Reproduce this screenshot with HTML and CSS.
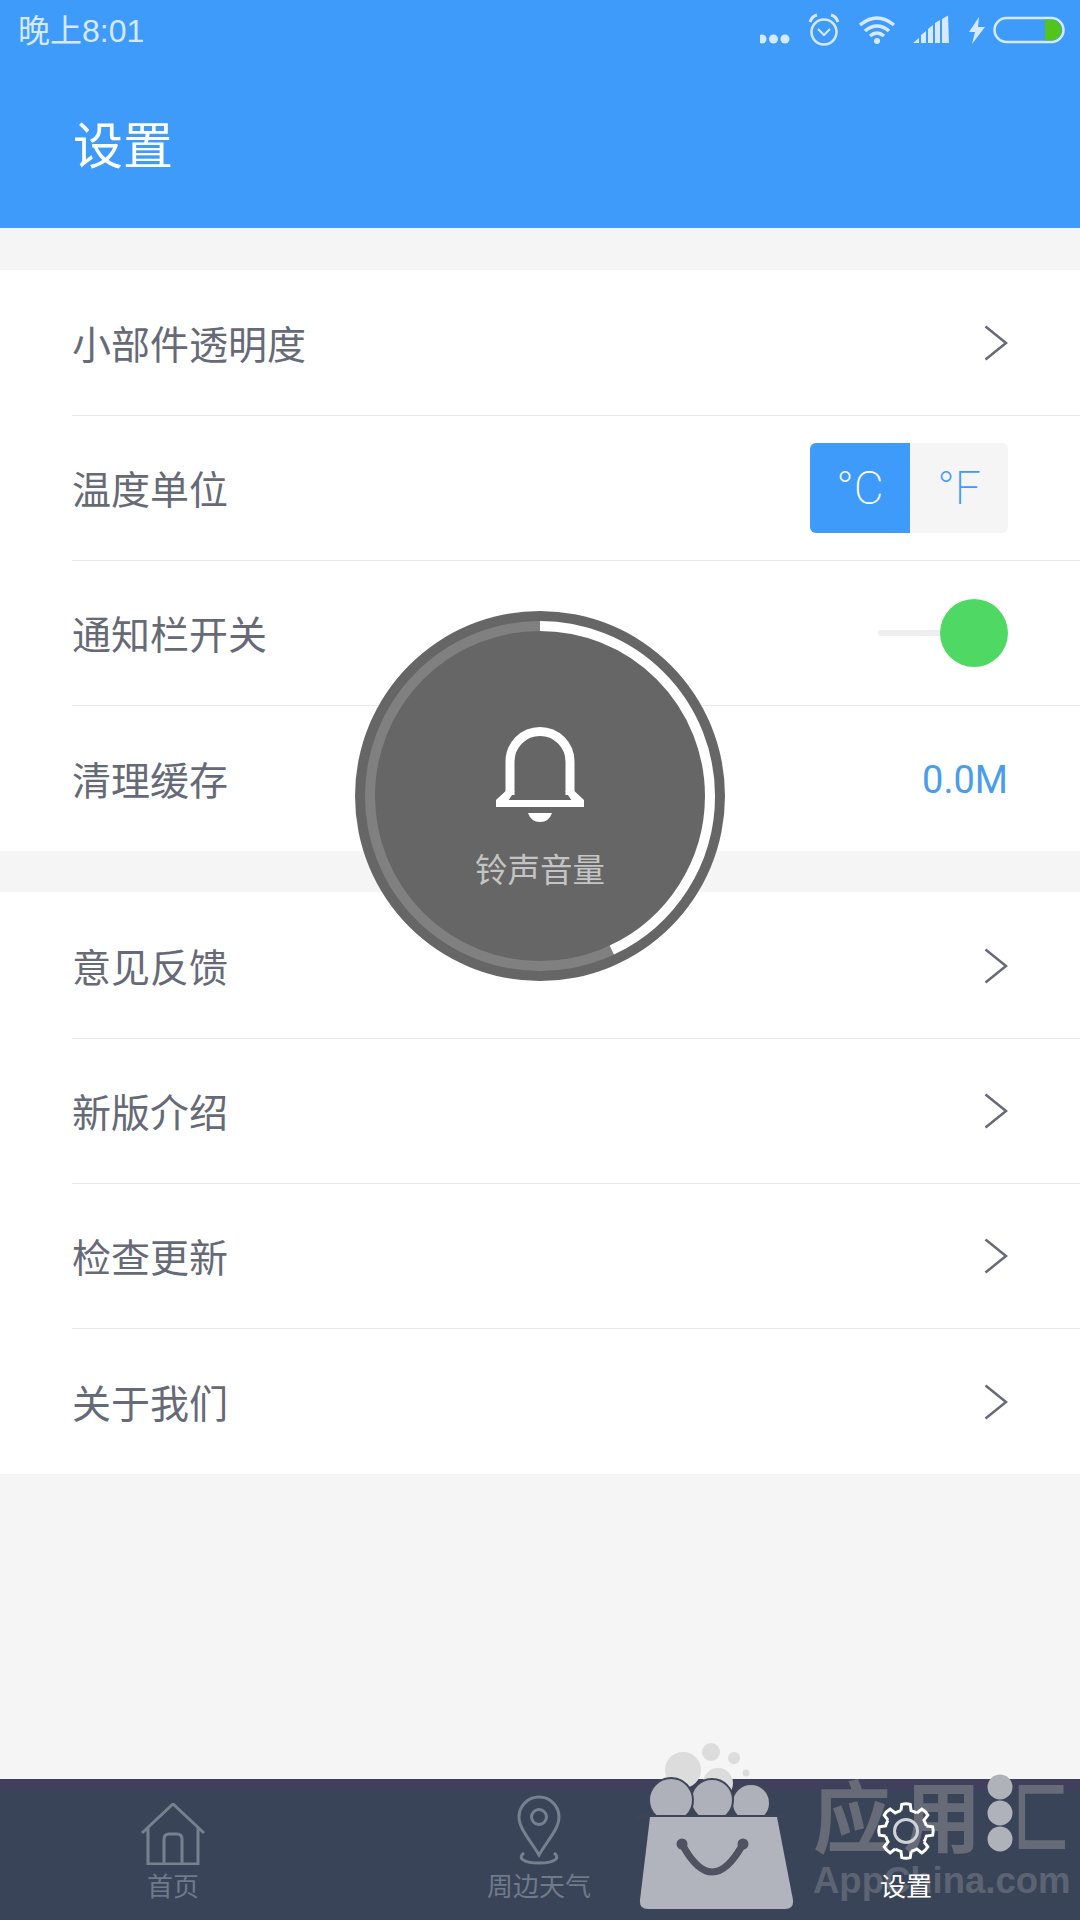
FILE: index.html
```html
<!DOCTYPE html>
<html lang="zh-CN">
<head>
<meta charset="utf-8">
<title>设置</title>
<link rel="stylesheet" href="styles.css">
</head>
<body>
<div class="app">
  <header class="header">
    <div class="status">
      <span class="time">晚上8:01</span>
      <svg class="status-icons" width="320" height="60" viewBox="760 0 320 60">
        <g fill="#d6e9fe">
          <circle cx="762" cy="39" r="4.500"/><circle cx="773.500" cy="39" r="4.500"/><circle cx="785" cy="39" r="4.500"/>
        </g>
        <g fill="none" stroke="#d6e9fe" stroke-width="2.500">
          <circle cx="824" cy="32" r="12.500"/>
          <path d="M818 29l6 6 6-6" stroke-width="2"/>
          <path d="M810 22q2-6 7-7M838 22q-2-6-7-7" stroke-width="3"/>
          <path d="M860 25q17-14 34 0M865 31q12-10 24 0M870 36q7-6 14 0" stroke-width="3.500"/>
          <rect x="994.500" y="18" width="69" height="24" rx="12" stroke-width="2.500"/>
        </g>
        <circle cx="877" cy="41" r="3" fill="#d6e9fe"/>
        <g fill="#d6e9fe">
          <path d="M913 43l6-5v5zM921 43v-8l5-4v12zM928 43V29l5-4v18zM935 43V23l5-3v23zM942 43V19l6-3.500 1 27.500z"/>
          <path d="M979 17l-10 15h6l-3 12 13-17h-7z"/>
        </g>
        <path d="M1045 19.500h6a10.500 10.500 0 0 1 0 21h-6z" fill="#52c41a"/>
      </svg>
    </div>
    <h1 class="title">设置</h1>
  </header>

  <main class="main">
    <section class="group">
      <div class="row"><span>小部件透明度</span>
        <svg class="chev" width="24" height="36" viewBox="0 0 24 36"><path d="M1.500 1.500L22 18 1.500 34.500"/></svg></div>
      <div class="row"><span>温度单位</span>
        <div class="seg"><span class="seg-item seg-on">°C</span><span class="seg-item">°F</span></div></div>
      <div class="row"><span>通知栏开关</span>
        <div class="switch"><i class="track"></i><i class="knob"></i></div></div>
      <div class="row"><span>清理缓存</span><span class="value">0.0M</span></div>
    </section>
    <section class="group group-second">
      <div class="row"><span>意见反馈</span>
        <svg class="chev" width="24" height="36" viewBox="0 0 24 36"><path d="M1.500 1.500L22 18 1.500 34.500"/></svg></div>
      <div class="row"><span>新版介绍</span>
        <svg class="chev" width="24" height="36" viewBox="0 0 24 36"><path d="M1.500 1.500L22 18 1.500 34.500"/></svg></div>
      <div class="row"><span>检查更新</span>
        <svg class="chev" width="24" height="36" viewBox="0 0 24 36"><path d="M1.500 1.500L22 18 1.500 34.500"/></svg></div>
      <div class="row"><span>关于我们</span>
        <svg class="chev" width="24" height="36" viewBox="0 0 24 36"><path d="M1.500 1.500L22 18 1.500 34.500"/></svg></div>
    </section>
  </main>

  <nav class="tabbar">
    <div class="tab">
      <svg class="tab-icon" width="64" height="62" viewBox="0 0 64 62">
        <path d="M1 30L32 1l31 29M7 25v36h50V25M23 60V36q0-5 5-5h8q5 0 5 5v24"/>
      </svg>
      <span>首页</span>
    </div>
    <div class="tab">
      <svg class="tab-icon" width="46" height="70" viewBox="0 0 46 70">
        <path d="M23 60C15 46 3 34 3 22a20 20 0 0 1 40 0c0 12-12 24-20 38z"/>
        <circle cx="23" cy="22" r="7.500"/>
        <path d="M8 58c-6 4-3 10 15 10s21-6 15-10"/>
      </svg>
      <span>周边天气</span>
    </div>
    <div class="tab tab-on">
      <svg class="tab-icon" width="62" height="62" viewBox="-31 -31 62 62">
        <defs><path id="cog" d="M-5.080-20.380L-4.220-26.670Q0-27.800 4.220-26.670L5.080-20.380Q8-19.500 10.820-18"/></defs>
        <use href="#cog"/><use href="#cog" transform="rotate(45)"/><use href="#cog" transform="rotate(90)"/><use href="#cog" transform="rotate(135)"/>
        <use href="#cog" transform="rotate(180)"/><use href="#cog" transform="rotate(225)"/><use href="#cog" transform="rotate(270)"/><use href="#cog" transform="rotate(315)"/>
        <circle r="11.500" class="cog-hub"/>
      </svg>
      <span>设置</span>
    </div>
  </nav>

  <div class="watermark">
    <svg class="wm-bag" width="160" height="172" viewBox="0 0 160 172">
      <g fill="#dcdcdc">
        <circle cx="47" cy="30" r="18"/><circle cx="75" cy="12" r="9"/><circle cx="98" cy="18" r="6"/><circle cx="110" cy="33" r="3.500"/><circle cx="82" cy="43" r="15"/>
      </g>
      <g fill="#aeb1ba" stroke="#3f4557" stroke-width="2">
        <circle cx="115" cy="63" r="19"/><circle cx="76" cy="60" r="21"/><circle cx="35" cy="60" r="22"/>
      </g>
      <path d="M0 75h150v3H0z" fill="#3f4557"/>
      <path d="M14 77h127l16 83q1 9-8 9H12q-9 0-8-9z" fill="#b1b4bc"/>
      <path d="M46 104q30 56 61 0" fill="none" stroke="#4f5361" stroke-width="7"/>
      <circle cx="46" cy="104" r="5.500" fill="#4f5361"/><circle cx="107" cy="104" r="5.500" fill="#4f5361"/>
    </svg>
    <div class="wm-text">
      <div class="wm-name"><span class="wm-chars">应用</span><svg class="wm-dots" width="26" height="78" viewBox="0 0 26 78"><circle cx="13" cy="13" r="12.500"/><circle cx="13" cy="39" r="12.500"/><circle cx="13" cy="65" r="12.500"/></svg><span class="wm-kuang">匚</span></div>
      <div class="wm-url">AppChina.com</div>
    </div>
  </div>

  <div class="volume">
    <svg class="volume-ring" width="370" height="370" viewBox="0 0 370 370">
      <circle cx="185" cy="185" r="185" class="vr-bg"/>
      <circle cx="185" cy="185" r="170" class="vr-track"/>
      <circle cx="185" cy="185" r="170" class="vr-bar" pathLength="360" stroke-dasharray="155 360" transform="rotate(-90 185 185)"/>
    </svg>
    <svg class="bell" width="90" height="98" viewBox="0 0 90 98">
      <path d="M15 68V34.500a30 30 0 0 1 60 0V68" fill="none" stroke="#fff" stroke-width="9"/>
      <path d="M10.700 64L1 73v7h88v-7l-9.700-9h-9l6 9H13.700l6-9z" fill="#fff"/>
      <path d="M33 86h24q-3 9-12 9t-12-9z" fill="#fff"/>
    </svg>
    <span class="volume-label">铃声音量</span>
  </div>
</div>
</body>
</html>
```
FILE: styles.css
```css
* { box-sizing: border-box; }
html, body { margin: 0; padding: 0; }
body { font-family: "Noto Sans CJK SC", "Noto Sans", sans-serif; }
.app { position: relative; width: 1080px; height: 1920px; display: flex; flex-direction: column; overflow: hidden; background: #f5f5f5; }

.header { height: 228px; background: #3f9bfa; color: #fff; display: flex; flex-direction: column; flex: none; }
.status { height: 60px; display: flex; align-items: center; justify-content: space-between; padding: 0 0 4px 18px; }
.time { font-family: "Liberation Sans", "Noto Sans CJK SC", sans-serif; font-size: 32px; color: #d6e9fe; letter-spacing: 0; }
.status-icons { display: block; margin-bottom: -4px; }
.title { margin: 0; font-size: 50px; font-weight: 400; line-height: 66px; padding: 49px 0 0 73px; }

.main { flex: 1; display: flex; flex-direction: column; gap: 41px; padding-top: 42px; }
.group { background: #fff; padding: 1px 0 0 72px; }
.group-second { padding-top: 2px; }
.row { height: 145px; display: flex; align-items: center; justify-content: space-between; padding-right: 72px; border-bottom: 1px solid #e9e9e9; font-size: 39px; color: #666a77; }
.row > span { margin-bottom: 2px; }
.row:last-child { border-bottom: 0; }
.chev { display: block; fill: none; stroke: #666a77; stroke-width: 2.500px; }

.seg { display: flex; width: 198px; height: 90px; border-radius: 6px; overflow: hidden; background: #f5f5f5; }
.seg-item { flex: 1; display: flex; align-items: center; justify-content: center; font-family: Roboto, sans-serif; font-weight: 200; font-size: 46px; color: #3f9bfa; }
.seg-on { flex: none; width: 100px; background: #3f9bfa; color: #fff; }

.switch { display: flex; align-items: center; width: 130px; }
.track { display: block; width: 70px; height: 6px; background: #eeeeee; border-radius: 3px; margin-right: -8px; }
.knob { display: block; width: 68px; height: 68px; border-radius: 50%; background: #4fd964; }
.row > .value { font-family: Roboto, sans-serif; font-size: 38px; color: #4a9de8; margin: 2px 0 0; }

.tabbar { position: relative; flex: none; height: 141px; background: #3a4458; border-top: 13px solid #403f5c; display: grid; grid-template-columns: 346px 386px 348px; }
.tab { position: relative; z-index: 4; display: flex; flex-direction: column; align-items: center; justify-content: flex-end; padding-bottom: 17px; font-size: 26px; line-height: 36px; color: #6f7a8b; }
.tab-icon { display: block; fill: none; stroke: #76818f; stroke-width: 3px; margin-bottom: 2px; }
.tab-on { color: #fff; }
.tab-on .tab-icon { stroke: #fff; margin-bottom: 5px; }
.tab-on .cog-hub { stroke: #cfd2d6; }

.watermark { position: absolute; z-index: 3; left: 636px; top: 1740px; display: flex; pointer-events: none; }
.wm-bag { display: block; flex: none; }
.wm-text { position: absolute; left: 177px; top: 33px; width: 270px; white-space: nowrap; }
.wm-name { display: flex; align-items: center; height: 80px; font-size: 78px; font-weight: 700; line-height: 80px; color: #666b77; }
.wm-chars { letter-spacing: 12px; }
.wm-dots { fill: #b0b2ba; margin: 0 0 0 -6px; display: block; flex: none; }
.wm-kuang { display: block; transform: scaleX(0.72); transform-origin: left center; }
.wm-url { font-family: "Liberation Sans", sans-serif; font-weight: 700; font-size: 36.500px; line-height: 50px; color: #5c6473; margin-top: 3px; }

.volume { position: absolute; left: 355px; top: 611px; width: 370px; height: 370px; z-index: 5; display: flex; flex-direction: column; align-items: center; }
.volume-ring { position: absolute; left: 0; top: 0; display: block; }
.vr-bg { fill: #666666; }
.vr-track { fill: none; stroke: #808080; stroke-width: 10px; }
.vr-bar { fill: none; stroke: #fff; stroke-width: 10px; }
.bell { position: relative; display: block; margin-top: 116px; }
.volume-label { position: relative; font-size: 32.500px; line-height: 46px; color: #c4c4c4; margin-top: 20px; }
```
